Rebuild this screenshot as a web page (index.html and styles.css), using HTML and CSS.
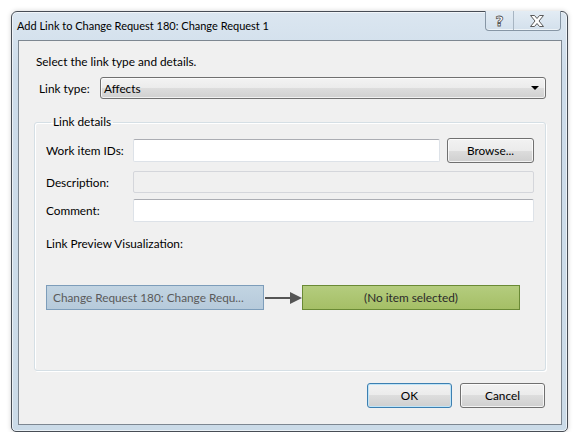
FILE: index.html
```html
<!DOCTYPE html>
<html>
<head>
<meta charset="utf-8">
<link rel="stylesheet" href="styles.css">
</head>
<body>
<div class="window">
  <div class="titlebar">
    <span class="title">Add Link to Change Request 180: Change Request 1</span>
    <div class="caption-btns">
      <div class="cap-btn help"><span class="help-glyph">?</span></div>
      <div class="cap-btn close">
        <svg width="16" height="12" viewBox="0 0 16 12"><path d="M1.5 0.5 H5.5 L8 3.5 L10.5 0.5 H14.5 L10 6 L14.5 11.5 H10.5 L8 8.5 L5.5 11.5 H1.5 L6 6 Z" fill="#fff" stroke="#5a5a5a" stroke-width="1" stroke-linejoin="round"/></svg>
      </div>
    </div>
  </div>
  <div class="client">
    <div class="intro">Select the link type and details.</div>
    <div class="type-row">
      <span class="type-label">Link type:</span>
      <div class="combo">
        <span>Affects</span>
        <span class="combo-arrow"></span>
      </div>
    </div>
    <fieldset class="group">
      <legend>Link details</legend>
      <div class="row row1">
        <span class="label">Work item IDs:</span>
        <div class="input ids"></div>
        <div class="btn browse">Browse...</div>
      </div>
      <div class="row row2">
        <span class="label">Description:</span>
        <div class="input disabled"></div>
      </div>
      <div class="row row3">
        <span class="label">Comment:</span>
        <div class="input"></div>
      </div>
      <div class="preview-label">Link Preview Visualization:</div>
      <div class="preview">
        <div class="node source">Change Request 180: Change Requ...</div>
        <svg class="arrow" width="38" height="14" viewBox="0 0 38 14"><line x1="1" y1="7" x2="28" y2="7" stroke="#555" stroke-width="2"/><polygon points="26,1 38,7 26,13" fill="#555"/></svg>
        <div class="node target">(No item selected)</div>
      </div>
    </fieldset>
    <div class="buttons">
      <div class="btn ok">OK</div>
      <div class="btn cancel">Cancel</div>
    </div>
  </div>
</div>
</body>
</html>
```
FILE: styles.css
```css
html, body {
  margin: 0;
  padding: 0;
  background: #ffffff;
}
body {
  font-family: Lato, "Noto Sans", sans-serif;
  font-size: 11.8px;
  color: #000;
}
.window {
  box-sizing: border-box;
  margin: 11px 0 0 11px;
  width: 557px;
  height: 421px;
  border: 1px solid #474d55;
  border-radius: 6px 6px 5px 5px;
  background: linear-gradient(#dbe6f0, #cddcea 60px, #cbdbe8);
  padding: 0 5px 6px 6px;
  box-shadow: 0 0 5px rgba(0,0,0,0.18), inset 0 0 0 1px rgba(255,255,255,0.6);
  display: flex;
  flex-direction: column;
}
.titlebar {
  height: 28px;
  display: flex;
  align-items: flex-start;
}
.title {
  margin-left: -1px;
  margin-top: 6px;
  line-height: 16px;
  font-size: 11px;
  color: #000;
}
.caption-btns {
  margin-left: auto;
  margin-right: 1px;
  margin-top: -1px;
  display: flex;
  border: 1px solid #8796a5;
  border-top: none;
  border-radius: 0 0 4px 4px;
  overflow: hidden;
  background: linear-gradient(#e3ecf4, #d3e0ec);
  box-shadow: inset 0 -1px 0 rgba(255,255,255,0.6);
}
.cap-btn {
  height: 19px;
  display: flex;
  align-items: center;
  justify-content: center;
}
.help {
  width: 27px;
  border-right: 1px solid #a7b5c2;
}
.help-glyph {
  font-family: "DejaVu Sans", sans-serif;
  font-weight: bold;
  font-size: 14px;
  line-height: 14px;
  color: #fff;
  -webkit-text-stroke: 0.8px #555;
}
.close {
  width: 46px;
}
.client {
  flex: 1;
  border: 1px solid #7d8791;
  background: #f0f0f0;
  padding: 13px 15px 0 15px;
  display: flex;
  flex-direction: column;
}
.intro {
  line-height: 16px;
  margin-left: 2px;
}
.type-row {
  margin-top: 7px;
  display: flex;
  align-items: center;
  height: 22px;
}
.type-label {
  margin-left: 5px;
  width: 61px;
}
.combo {
  box-sizing: border-box;
  flex: 1;
  height: 22px;
  border: 1px solid #707070;
  border-radius: 3px;
  background: linear-gradient(#f3f3f3, #ebebeb 50%, #dddddd 50%, #d0d0d0);
  display: flex;
  align-items: center;
  padding: 0 6px 0 3px;
  box-shadow: inset 0 0 0 1px rgba(255,255,255,0.7);
}
.combo-arrow {
  margin-left: auto;
  width: 0;
  height: 0;
  border-left: 4px solid transparent;
  border-right: 4px solid transparent;
  border-top: 4px solid #000;
}
.group {
  margin: 15px 0 0 0;
  padding: 8px 11px 60px 11px;
  border: 1px solid #d5dfe5;
  border-radius: 3px;
  box-shadow: inset 1px 1px 0 #fff, 1px 1px 0 #fff;
  min-width: 0;
}
.group legend {
  padding: 0 2px;
  margin-left: 5px;
  line-height: 16px;
}
.row {
  display: flex;
  align-items: center;
}
.label {
  width: 87px;
  flex: none;
}
.row1 { height: 25px; }
.row2 { height: 22px; margin-top: 8px; }
.row3 { height: 23px; margin-top: 6px; }
.input {
  box-sizing: border-box;
  flex: 1;
  height: 100%;
  background: #fff;
  border: 1px solid #dde2e8;
  border-top-color: #abadb3;
  border-radius: 2px;
}
.row1 .input { height: 23px; }
.input.disabled {
  background: #f0f0f0;
  border-color: #d4d6db;
}
.btn {
  box-sizing: border-box;
  border: 1px solid #707070;
  border-radius: 3px;
  background: linear-gradient(#f2f2f2, #ebebeb 50%, #dddddd 50%, #cfcfcf);
  box-shadow: inset 0 0 0 1px rgba(255,255,255,0.75);
  display: flex;
  align-items: center;
  justify-content: center;
  height: 25px;
}
.browse {
  width: 87px;
  margin-left: 7px;
}
.preview-label {
  margin-top: 14px;
  line-height: 16px;
}
.preview {
  margin-top: 33px;
  display: flex;
  align-items: center;
  height: 25px;
}
.node {
  box-sizing: border-box;
  width: 218px;
  height: 25px;
  display: flex;
  align-items: center;
}
.source {
  background: linear-gradient(#c2d4e2, #b6cadb);
  border: 1px solid #7d9dba;
  color: #5a5a5a;
  padding-left: 6px;
  white-space: nowrap;
  overflow: hidden;
}
.arrow {
  flex: none;
}
.target {
  background: linear-gradient(#b4cc7e, #a5bf66);
  border: 1px solid #6a8a35;
  justify-content: center;
  color: #2a2a2a;
}
.buttons {
  margin-top: 12px;
  display: flex;
  justify-content: flex-end;
  margin-right: 1px;
}
.ok {
  width: 85px;
  border-color: #3c7fb1;
  box-shadow: inset 0 0 0 1px #bfe4f7;
}
.cancel {
  width: 85px;
  margin-left: 8px;
}
```
